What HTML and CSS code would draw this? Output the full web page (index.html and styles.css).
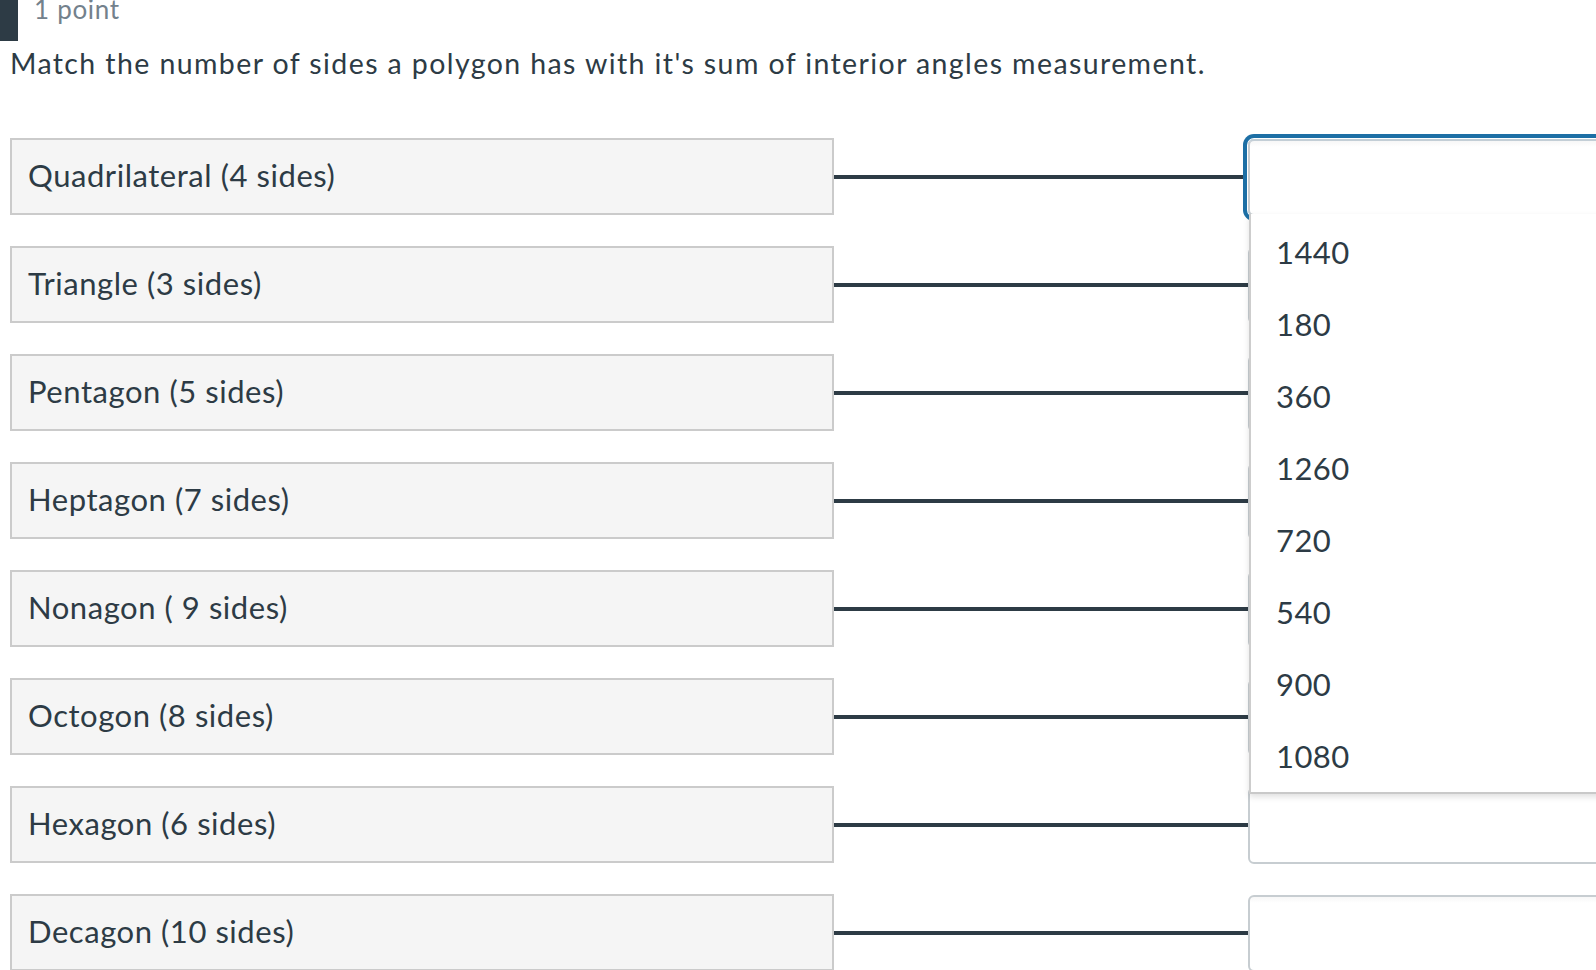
FILE: index.html
```html
<!DOCTYPE html>
<html lang="en">
<head>
<meta charset="utf-8">
<title>Matching question</title>
<link rel="stylesheet" href="styles.css">
</head>
<body>
<div class="page">
  <div class="header">
    <div class="header-bar"></div>
    <div class="points">1 point</div>
  </div>
  <div class="question">Match the number of sides a polygon has with it's sum of interior angles measurement.</div>
  <div class="rows">
    <div class="row">
      <div class="answer">Quadrilateral (4 sides)</div>
      <div class="connector"><div class="line"></div></div>
      <div class="select-cell">
        <div class="select focused"></div>
        <ul class="listbox">
          <li>1440</li>
          <li>180</li>
          <li>360</li>
          <li>1260</li>
          <li>720</li>
          <li>540</li>
          <li>900</li>
          <li>1080</li>
        </ul>
      </div>
    </div>
    <div class="row">
      <div class="answer">Triangle (3 sides)</div>
      <div class="connector"><div class="line"></div></div>
      <div class="select-cell"><div class="select"></div></div>
    </div>
    <div class="row">
      <div class="answer">Pentagon (5 sides)</div>
      <div class="connector"><div class="line"></div></div>
      <div class="select-cell"><div class="select"></div></div>
    </div>
    <div class="row">
      <div class="answer">Heptagon (7 sides)</div>
      <div class="connector"><div class="line"></div></div>
      <div class="select-cell"><div class="select"></div></div>
    </div>
    <div class="row">
      <div class="answer">Nonagon ( 9 sides)</div>
      <div class="connector"><div class="line"></div></div>
      <div class="select-cell"><div class="select"></div></div>
    </div>
    <div class="row">
      <div class="answer">Octogon (8 sides)</div>
      <div class="connector"><div class="line"></div></div>
      <div class="select-cell"><div class="select"></div></div>
    </div>
    <div class="row">
      <div class="answer">Hexagon (6 sides)</div>
      <div class="connector"><div class="line"></div></div>
      <div class="select-cell"><div class="select"></div></div>
    </div>
    <div class="row">
      <div class="answer">Decagon (10 sides)</div>
      <div class="connector"><div class="line"></div></div>
      <div class="select-cell"><div class="select"></div></div>
    </div>
  </div>
</div>
</body>
</html>
```

FILE: styles.css
```css
html, body {
  margin: 0;
  padding: 0;
  background: #ffffff;
  overflow: hidden;
}
body {
  width: 1596px;
  height: 970px;
  font-family: Lato, "Open Sans", sans-serif;
  color: #2d3b45;
}
.page {
  width: 1596px;
  height: 970px;
  overflow: hidden;
}
.header {
  display: flex;
  align-items: flex-start;
  height: 41px;
  overflow: hidden;
}
.header-bar {
  width: 18px;
  height: 41px;
  background: #2d3b45;
  flex: none;
}
.points {
  margin-left: 16px;
  margin-top: -4px;
  font-size: 26px;
  line-height: 26px;
  letter-spacing: 0.7px;
  color: #73818c;
}
.question {
  margin-top: 5px;
  padding-left: 10px;
  font-size: 28.5px;
  line-height: 34px;
  letter-spacing: 1.4px;
  white-space: nowrap;
}
.rows {
  margin-top: 58px;
  padding-left: 10px;
  display: flex;
  flex-direction: column;
  gap: 31px;
}
.row {
  display: grid;
  grid-template-columns: 824px 414px 700px;
  height: 77px;
}
.answer {
  box-sizing: border-box;
  height: 77px;
  border: 2px solid #cbcbcb;
  background: #f5f5f5;
  padding-left: 16px;
  padding-bottom: 4px;
  display: flex;
  align-items: center;
  font-size: 31px;
  line-height: 36px;
  letter-spacing: 0.55px;
  white-space: nowrap;
}
.connector {
  display: flex;
  align-items: center;
}
.line {
  width: 100%;
  height: 4px;
  background: #2d3b45;
}
.select-cell {
  position: relative;
  padding-top: 1px;
}
.select {
  box-sizing: border-box;
  height: 77px;
  border: 2px solid #c7cdd1;
  border-radius: 6px;
  background: linear-gradient(#f7f7f7, #ffffff 6px);
}
.select.focused {
  border-top-color: #c3ced6;
  box-shadow: 0 0 0 1px #ffffff, 0 0 0 5px #1d6fa5;
}
.listbox {
  position: absolute;
  left: 1px;
  top: 76px;
  width: 700px;
  margin: 0;
  padding: 2px 0 0 0;
  list-style: none;
  background: #ffffff;
  border-left: 2px solid #cdcdcd;
  border-bottom: 2px solid #c9c9c9;
  box-shadow: 0 3px 6px rgba(0, 0, 0, 0.12);
  z-index: 2;
}
.listbox li {
  height: 72px;
  line-height: 72px;
  padding-left: 25px;
  font-size: 31px;
  letter-spacing: 0.45px;
  color: #2d3b45;
}
```
